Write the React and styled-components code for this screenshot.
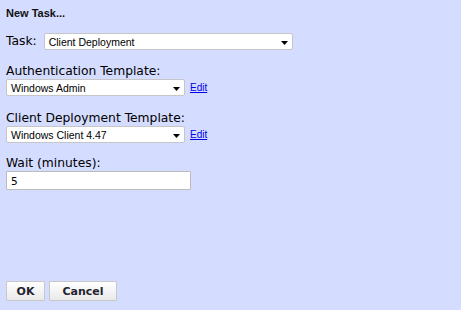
import React from "react";
import styled, { createGlobalStyle } from "styled-components";

const Global = createGlobalStyle`
  html, body { margin: 0; padding: 0; background: #d4dcff; }
  #root { min-height: 100vh; }
  * { box-sizing: border-box; }
`;

const Page = styled.div`
  min-height: 100vh;
  padding: 7px 6px 9px;
  display: flex;
  flex-direction: column;
  font-family: "DejaVu Sans", Verdana, sans-serif;
  color: #000;
`;

const Title = styled.div`
  font-family: "Liberation Sans", Arial, sans-serif;
  font-weight: bold;
  font-size: 11px;
  line-height: 13px;
  color: #111;
`;

const Row = styled.div`
  display: flex;
  align-items: center;
  gap: 7px;
  margin-top: ${(p) => p.$mt || 14}px;
`;

const Field = styled.div`
  display: flex;
  flex-direction: column;
  margin-top: ${(p) => p.$mt || 14}px;
`;

const Label = styled.label`
  display: block;
  font-size: 12.3px;
  line-height: 15px;
  color: #000;
`;

const SelectBox = styled.div`
  width: ${(p) => p.$w}px;
  height: 17px;
  background: #fff;
  border: 1px solid #c6c6c6;
  border-radius: 2px;
  display: flex;
  align-items: center;
  justify-content: space-between;
  padding: 0 4px 0 4px;
  font-family: "Liberation Sans", Arial, sans-serif;
  font-size: 10.5px;
  color: #000;
`;

const Arrow = styled.svg`
  width: 7px;
  height: 4px;
  flex: none;
  margin-top: 2px;
`;

const Inline = styled.div`
  display: flex;
  align-items: center;
  gap: 5px;
`;

const EditLink = styled.a`
  font-family: "Liberation Sans", Arial, sans-serif;
  font-size: 10px;
  color: #0000ee;
  text-decoration: underline;
`;

const TextInput = styled.div`
  width: 185px;
  height: 19px;
  background: #fff;
  border: 1px solid #bcbcbc;
  border-radius: 1px;
  display: flex;
  align-items: center;
  padding: 0 4px;
  font-family: "DejaVu Sans", Tahoma, sans-serif;
  font-size: 10.5px;
`;

const ButtonBar = styled.div`
  margin-top: auto;
  display: flex;
  gap: 4px;
`;

const Button = styled.button`
  width: ${(p) => p.$w}px;
  height: 20px;
  padding: 0;
  border: 1px solid #c8c8c8;
  border-radius: 1px;
  background: linear-gradient(#ffffff, #e9e9e9);
  font-family: "DejaVu Sans", Tahoma, sans-serif;
  font-weight: bold;
  font-size: 11px;
  color: #1f2430;
`;

const Select = ({ w, value }) => (
  <SelectBox $w={w}>
    <span>{value}</span>
    <Arrow viewBox="0 0 7 4">
      <polygon points="0,0 7,0 3.5,4" fill="#000" />
    </Arrow>
  </SelectBox>
);

export default function App() {
  return (
    <>
      <Global />
      <Page>
        <Title>New Task...</Title>
        <Row $mt={13}>
          <Label>Task:</Label>
          <Select w={249} value="Client Deployment" />
        </Row>
        <Field $mt={14}>
          <Label>Authentication Template:</Label>
          <Inline>
            <Select w={179} value="Windows Admin" />
            <EditLink href="#">Edit</EditLink>
          </Inline>
        </Field>
        <Field $mt={15}>
          <Label>Client Deployment Template:</Label>
          <Inline>
            <Select w={179} value="Windows Client 4.47" />
            <EditLink href="#">Edit</EditLink>
          </Inline>
        </Field>
        <Field $mt={13}>
          <Label>Wait (minutes):</Label>
          <TextInput>5</TextInput>
        </Field>
        <ButtonBar>
          <Button $w={39}>OK</Button>
          <Button $w={68}>Cancel</Button>
        </ButtonBar>
      </Page>
    </>
  );
}
